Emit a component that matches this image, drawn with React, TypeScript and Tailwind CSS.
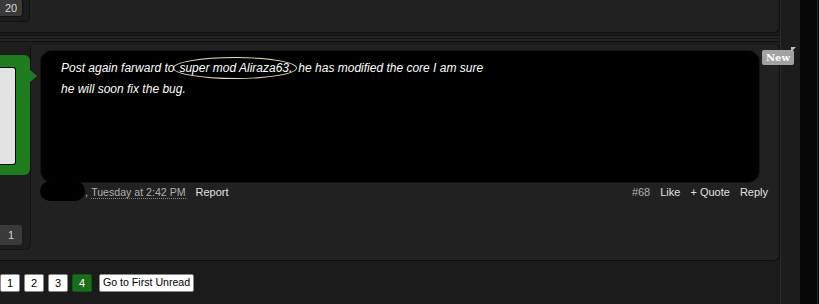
import React from "react";

const pageBtn =
  "flex h-[18px] min-w-[20px] items-center justify-center rounded-[2px] border border-[#8a8a8a] bg-white px-[5px] text-[11px] text-black";

export default function App() {
  return (
    <div className="flex h-[304px] w-[819px] overflow-hidden bg-[#1b1b1b] font-['Liberation_Sans',Arial,sans-serif]">
      <div className="flex w-[780px] flex-col">
        {/* end of the previous post */}
        <div className="flex h-[33px] shrink-0 rounded-br-[6px] border-r border-b border-[#0d0d0d] bg-[#212121]">
          <div className="h-[22px] w-[30px] rounded-br-[5px] border-r border-b border-[#111] bg-[#1c1c1c]">
            <div className="flex h-[17px] w-[23px] items-center justify-center rounded-br-[3px] border-r border-b border-[#111] bg-[#3a3a3a] text-[11px] text-[#d8d8d8]">
              20
            </div>
          </div>
        </div>

        {/* separator lines */}
        <div className="flex h-[12px] shrink-0 flex-col">
          <div className="h-[2px] bg-[#1a1a1a]" />
          <div className="h-[1px] bg-[#101010]" />
          <div className="h-[2px] bg-[#222]" />
          <div className="h-[1px] bg-[#111]" />
          <div className="h-[2px] bg-[#242424]" />
          <div className="h-[1px] bg-[#111]" />
          <div className="h-[3px] bg-[#1d1d1d]" />
        </div>

        {/* the post */}
        <div className="flex h-[216px] shrink-0 rounded-br-[6px] rounded-tr-[4px] border-r border-b border-[#0d0d0d] bg-[#212121]">
          <div className="relative flex h-[205px] w-[31px] shrink-0 flex-col rounded-br-[6px] border-r border-b border-[#111] bg-[#1d1d1d]">
            <div className="relative mt-[10px] h-[120px] w-[30px] rounded-r-[6px] bg-[#1f7d1f] pt-[12px]">
              <div className="h-[98px] w-[16px] rounded-r-[3px] border border-l-0 border-black bg-[#e3e3e3]" />
              <div className="absolute left-[29px] top-[14px] h-0 w-0 border-y-[7px] border-l-[8px] border-y-transparent border-l-[#1f7d1f]" />
            </div>
            <div className="mt-[50px] flex h-[20px] w-[22px] items-center justify-center rounded-r-[3px] bg-[#3a3a3a] text-[11px] text-[#d0d0d0]">
              1
            </div>
          </div>

          <div className="flex flex-1 flex-col pl-[9px] pr-[19px] pt-[5px]">
            <div className="h-[133px] rounded-[12px] border border-[#151515] bg-black pl-[20px] pt-[7px] text-[12px] italic leading-[21px] text-white">
              <p>
                Post again farward to
                <span className="relative ml-[5px] mr-[6px]">
                  super mod Aliraza63.
                  <span className="absolute -left-[6px] -right-[5px] top-1/2 h-[22px] -translate-y-1/2 rounded-[50%] border border-[#e6dfb8]" />
                </span>
                he has modified the core I am sure
              </p>
              <p>he will soon fix the bug.</p>
            </div>

            <div className="-mr-[8px] flex h-[18px] items-center text-[11px]">
              <span className="-mt-[2px] h-[20px] w-[45px] rounded-full bg-black" />
              <span className="text-[#b0b0b0]">,&nbsp;</span>
              <span className="border-b border-dotted border-[#888] text-[10.6px] leading-[12px] text-[#b0b0b0]">
                Tuesday at 2:42 PM
              </span>
              <span className="ml-[10px] text-[#e0e0e0]">Report</span>
              <div className="ml-auto flex items-center gap-[10px]">
                <span className="text-[#b0b0b0]">#68</span>
                <span className="text-[#e0e0e0]">Like</span>
                <span className="text-[#e0e0e0]">+ Quote</span>
                <span className="text-[#e0e0e0]">Reply</span>
              </div>
            </div>
          </div>
        </div>

        {/* pagination */}
        <div className="flex flex-1 items-start gap-[4px] pt-[13px]">
          <span className={pageBtn}>1</span>
          <span className={pageBtn}>2</span>
          <span className={pageBtn}>3</span>
          <span className="flex h-[18px] min-w-[20px] items-center justify-center rounded-[2px] border border-[#0f5a0f] bg-[#1a6e1a] px-[5px] text-[11px] text-white">
            4
          </span>
          <span className={`${pageBtn} ml-[3px] !px-[3px] !text-[10.6px]`}>Go to First Unread</span>
        </div>
      </div>

      {/* right rail */}
      <div className="relative flex w-[39px] shrink-0">
        <div className="w-[20px] border-l border-[#2a2a2a] bg-[#1c1c1c]" />
        <div className="w-[17px] bg-[#070707]" />
        <div className="w-[1px] bg-[#262626]" />
        <div className="w-[1px] bg-[#070707]" />
        <div className="absolute -left-[18px] top-[50px] flex h-[15px] w-[32px] items-center justify-center rounded-[2px] bg-[#a2a2a2] font-['DejaVu_Serif',serif] text-[10px] font-bold text-white">
          New
          <span className="absolute -right-[2px] -top-[3px] h-0 w-0 border-b-[5px] border-l-[5px] border-b-transparent border-l-[#bdbdbd]" />
        </div>
      </div>
    </div>
  );
}
